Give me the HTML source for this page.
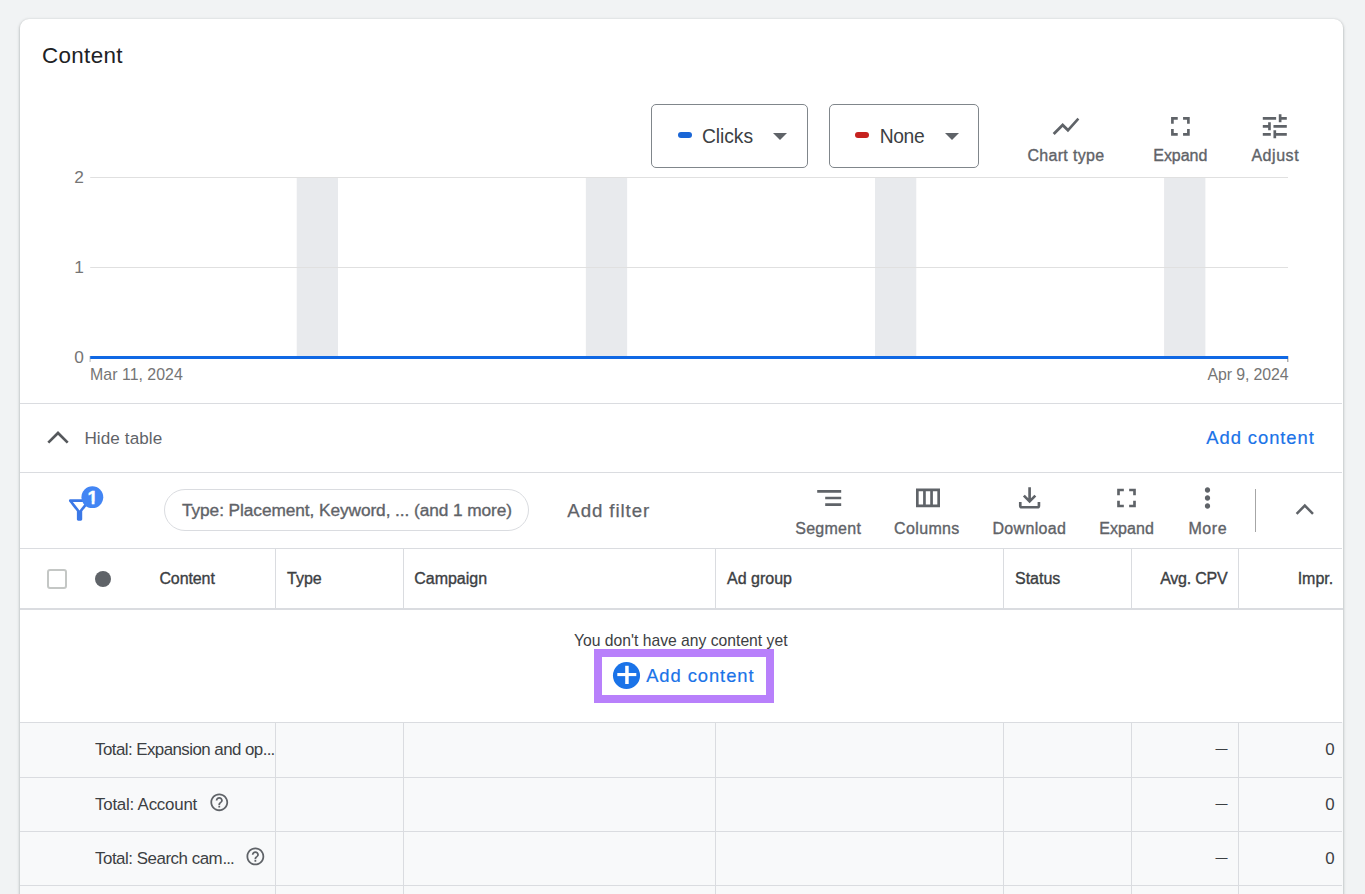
<!DOCTYPE html>
<html lang="en">
<head>
<meta charset="utf-8">
<title>Content</title>
<style>
html,body{margin:0;padding:0}
body{width:1365px;height:894px;overflow:hidden;background:#f1f3f4;position:relative;font-family:"Liberation Sans",sans-serif}
.abs{position:absolute}
.t{position:absolute;white-space:nowrap;line-height:1}
.card{position:absolute;left:20px;top:19px;width:1323px;height:900px;background:#fff;border-radius:9px 9px 0 0;box-shadow:0 1px 2px rgba(60,64,67,.3),0 1px 3px 1px rgba(60,64,67,.15)}
.hl{position:absolute;left:20px;width:1322px;height:1px;background:#dadce0}
.vl{position:absolute;width:1px;background:#dadce0}
.dd{position:absolute;box-sizing:border-box;border:1px solid #80868b;border-radius:5px;background:#fff}
.pill{position:absolute;width:14px;height:6px;border-radius:3px}
.arr{position:absolute;width:0;height:0;border-left:7px solid transparent;border-right:7px solid transparent;border-top:7px solid #5f6368}
.chip{position:absolute;left:164px;top:489px;width:365px;height:42px;box-sizing:border-box;border:1px solid #dadce0;border-radius:21px;background:#fff}
.b1{left:87.6px;top:489px;font-size:18.5px;font-weight:700;color:#fff;-webkit-text-stroke:.4px #fff;clip-path:polygon(0 0,100% 0,100% .675em,.375em .675em,.375em 1em,.225em 1em,.225em .675em,0 .675em)}
.cb{position:absolute;left:47px;top:569px;width:20px;height:20px;box-sizing:border-box;border:2px solid #c4c7c5;border-radius:3px;background:#fff}
</style>
</head>
<body>
<div class="card"></div>
<header class="card-title">
<span class="t" style="top:45.00px;font-size:22.4px;color:#202124;left:42.00px;letter-spacing:0.35px;">Content</span>
</header>
<section class="chart">
<svg class="abs" style="left:0;top:160px" width="1365" height="240" viewBox="0 160 1365 240">
<rect x="296.72" y="177" width="41.30" height="180.5" fill="#e8eaed"/>
<rect x="585.84" y="177" width="41.30" height="180.5" fill="#e8eaed"/>
<rect x="874.97" y="177" width="41.30" height="180.5" fill="#e8eaed"/>
<rect x="1164.09" y="177" width="41.30" height="180.5" fill="#e8eaed"/>
<line x1="90.2" x2="1288.0" y1="177.5" y2="177.5" stroke="#e0e0e0" stroke-width="1"/>
<line x1="90.2" x2="1288.0" y1="267.5" y2="267.5" stroke="#e0e0e0" stroke-width="1"/>
<rect x="89.5" y="356" width="1.2" height="6" fill="#c4c4c4"/>
<rect x="1287.2" y="356" width="1.2" height="6" fill="#9e9e9e"/>
<line x1="90.2" x2="1288.0" y1="357.45" y2="357.45" stroke="#1068e4" stroke-width="3"/>
</svg>
<span class="t" style="top:169.00px;font-size:17.3px;color:#757575;right:1281.10px;">2</span>
<span class="t" style="top:259.00px;font-size:17.3px;color:#757575;right:1281.10px;">1</span>
<span class="t" style="top:349.00px;font-size:17.3px;color:#757575;right:1281.10px;">0</span>
<span class="t" style="top:367.00px;font-size:15.9px;color:#757575;left:90.10px;letter-spacing:0.02px;">Mar 11, 2024</span>
<span class="t" style="top:367.00px;font-size:15.9px;color:#757575;right:76.50px;letter-spacing:-0.1px;">Apr 9, 2024</span>
</section>
<section class="chart-controls">
<div class="dd" style="left:651px;top:104px;width:157px;height:64px"></div>
<div class="pill" style="left:678px;top:132px;background:#1a66d6"></div>
<span class="t" style="top:127.00px;font-size:19.3px;color:#3c4043;left:702.00px;letter-spacing:-0.07px;">Clicks</span>
<div class="arr" style="left:773px;top:133.2px"></div>
<div class="dd" style="left:829.4px;top:104px;width:149.4px;height:64px"></div>
<div class="pill" style="left:855px;top:132px;background:#c5221f"></div>
<span class="t" style="top:127.00px;font-size:19.3px;color:#3c4043;left:879.70px;letter-spacing:-0.37px;">None</span>
<div class="arr" style="left:944.6px;top:133.2px"></div>
<svg class="abs" style="left:1050px;top:110px" width="33" height="33" viewBox="0 0 33 33"><path fill="#5f6368" transform="translate(0 0.3) scale(1.3333)" d="M3.5 18.49l6-6.01 4 4L22 6.92l-1.41-1.41-7.09 7.97-4-4L2 16.99z"/></svg>
<svg class="abs" style="left:1164px;top:110px" width="33" height="33" viewBox="0 0 33 33"><path fill="#5f6368" transform="translate(0.4 0.4) scale(1.3333)" d="M7 14H5v5h5v-2H7v-3zm-2-4h2V7h3V5H5v5zm12 7h-3v2h5v-5h-2v3zM14 5v2h3v3h2V5h-5z"/></svg>
<svg class="abs" style="left:1258px;top:110px" width="33" height="33" viewBox="0 0 33 33"><path fill="#5f6368" transform="translate(0.8 0.3) scale(1.3333)" d="M3 17v2h6v-2H3zM3 5v2h10V5H3zm10 16v-2h8v-2h-8v-2h-2v6h2zM7 9v2H3v2h4v2h2V9H7zm14 4v-2H11v2h10zm-6-4h2V7h4V5h-4V3h-2v6z"/></svg>
<span class="t" style="top:148.00px;font-size:16px;color:#5f6368;left:1027.40px;letter-spacing:0.32px;-webkit-text-stroke:0.35px #5f6368;">Chart type</span>
<span class="t" style="top:148.00px;font-size:16px;color:#5f6368;left:1153.30px;letter-spacing:-0.05px;-webkit-text-stroke:0.35px #5f6368;">Expand</span>
<span class="t" style="top:148.00px;font-size:16px;color:#5f6368;left:1251.40px;letter-spacing:0.55px;-webkit-text-stroke:0.35px #5f6368;">Adjust</span>
</section>
<section class="table-toggle">
<div class="hl" style="top:403px"></div>
<div class="hl" style="top:472px"></div>
<svg class="abs" style="left:44px;top:428px" width="28" height="20" viewBox="0 0 28 20"><polyline points="4.3,14.6 14,5 23.7,14.6" fill="none" stroke="#55585c" stroke-width="2.7"/></svg>
<span class="t" style="top:430.00px;font-size:17.1px;color:#5f6368;left:84.40px;letter-spacing:0.1px;">Hide table</span>
<span class="t" style="top:429.00px;font-size:18.4px;color:#1a73e8;left:1206.30px;letter-spacing:0.93px;-webkit-text-stroke:0.2px #1a73e8;">Add content</span>
</section>
<section class="toolbar">
<svg class="abs" style="left:63px;top:494px" width="33" height="33" viewBox="0 0 33 33"><path fill="#3b78e7" transform="translate(0.55 0.0) scale(1.3333)" d="M7 6h10l-5.01 6.3L7 6zm-2.75-.39C6.27 8.2 10 13 10 13v6c0 .55.45 1 1 1h2c.55 0 1-.45 1-1v-6s3.72-4.8 5.74-7.39c.51-.66.04-1.61-.79-1.61H5.04c-.83 0-1.3.95-.79 1.61z"/></svg>
<svg class="abs" style="left:80px;top:485px" width="25" height="25" viewBox="80 485 25 25"><circle cx="92.35" cy="497.2" r="10.9" fill="#4285f4"/></svg>
<span class="t b1">1</span>
<div class="chip"></div>
<span class="t" style="top:502.00px;font-size:17.3px;color:#5f6368;left:182.00px;letter-spacing:-0.08px;-webkit-text-stroke:0.35px #5f6368;">Type: Placement, Keyword, ... (and 1 more)</span>
<span class="t" style="top:502.00px;font-size:18.7px;color:#5f6368;left:567.30px;letter-spacing:0.9px;-webkit-text-stroke:0.25px #5f6368;">Add filter</span>
<svg class="abs" style="left:813px;top:482px" width="33" height="33" viewBox="0 0 33 33"><path fill="#5f6368" transform="translate(0.2 0) scale(1.3333)" d="M9 18h12v-2H9v2zM3 6v2h18V6H3zm6 7h12v-2H9v2z"/></svg>
<svg class="abs" style="left:912px;top:481px" width="33" height="33" viewBox="0 0 33 33"><path fill="#5f6368" transform="translate(0 0.8) scale(1.3333)" d="M3 5v14h18V5H3zm5.33 12H5V7h3.33v10zm5.34 0h-3.33V7h3.33v10zM19 17h-3.33V7H19v10z"/></svg>
<svg class="abs" style="left:1013px;top:481px" width="33" height="33" viewBox="0 0 33 33"><path fill="#5f6368" transform="translate(0.6 0.9) scale(1.3333)" d="M18 15v3H6v-3H4v3c0 1.1.9 2 2 2h12c1.1 0 2-.9 2-2v-3h-2zm-1-4l-1.41-1.41L13 12.17V4h-2v8.17L8.41 9.59 7 11l5 5 5-5z"/></svg>
<svg class="abs" style="left:1110px;top:482px" width="33" height="33" viewBox="0 0 33 33"><path fill="#5f6368" transform="translate(0.5 0) scale(1.3333)" d="M7 14H5v5h5v-2H7v-3zm-2-4h2V7h3V5H5v5zm12 7h-3v2h5v-5h-2v3zM14 5v2h3v3h2V5h-5z"/></svg>
<svg class="abs" style="left:1191px;top:482px" width="33" height="33" viewBox="0 0 33 33"><path fill="#5f6368" transform="translate(0.5 0) scale(1.3333)" d="M12 8c1.1 0 2-.9 2-2s-.9-2-2-2-2 .9-2 2 .9 2 2 2zm0 2c-1.1 0-2 .9-2 2s.9 2 2 2 2-.9 2-2-.9-2-2-2zm0 6c-1.1 0-2 .9-2 2s.9 2 2 2 2-.9 2-2-.9-2-2-2z"/></svg>
<span class="t" style="top:521.00px;font-size:16px;color:#5f6368;left:795.30px;letter-spacing:0.25px;-webkit-text-stroke:0.35px #5f6368;">Segment</span>
<span class="t" style="top:521.00px;font-size:16px;color:#5f6368;left:894.10px;letter-spacing:0.35px;-webkit-text-stroke:0.35px #5f6368;">Columns</span>
<span class="t" style="top:521.00px;font-size:16px;color:#5f6368;left:992.40px;letter-spacing:0.35px;-webkit-text-stroke:0.35px #5f6368;">Download</span>
<span class="t" style="top:521.00px;font-size:16px;color:#5f6368;left:1099.20px;letter-spacing:0.1px;-webkit-text-stroke:0.35px #5f6368;">Expand</span>
<span class="t" style="top:521.00px;font-size:16px;color:#5f6368;left:1188.40px;letter-spacing:0.6px;-webkit-text-stroke:0.35px #5f6368;">More</span>
<div class="abs" style="left:1255px;top:489px;width:1px;height:43px;background:#a6a6a6"></div>
<svg class="abs" style="left:1291px;top:499px" width="28" height="22" viewBox="0 0 28 22"><polyline points="5.6,14.8 13.8,6.6 22,14.8" fill="none" stroke="#5f6368" stroke-width="2.5"/></svg>
</section>
<section class="table-header">
<div class="hl" style="top:548px"></div>
<div class="abs" style="left:20px;top:608px;width:1323px;height:2px;background:#dadce0"></div>
<div class="vl" style="left:275px;top:549px;height:59px"></div>
<div class="vl" style="left:403px;top:549px;height:59px"></div>
<div class="vl" style="left:715px;top:549px;height:59px"></div>
<div class="vl" style="left:1003px;top:549px;height:59px"></div>
<div class="vl" style="left:1131px;top:549px;height:59px"></div>
<div class="vl" style="left:1238px;top:549px;height:59px"></div>
<div class="cb"></div>
<div class="abs" style="left:95px;top:571px;width:16px;height:16px;border-radius:50%;background:#5f6368"></div>
<span class="t" style="top:571.00px;font-size:16px;color:#3c4043;left:159.40px;letter-spacing:-0.1px;-webkit-text-stroke:0.35px #3c4043;">Content</span>
<span class="t" style="top:571.00px;font-size:16px;color:#3c4043;left:287.00px;-webkit-text-stroke:0.35px #3c4043;">Type</span>
<span class="t" style="top:571.00px;font-size:16px;color:#3c4043;left:414.20px;-webkit-text-stroke:0.35px #3c4043;">Campaign</span>
<span class="t" style="top:571.00px;font-size:16px;color:#3c4043;left:727.00px;-webkit-text-stroke:0.35px #3c4043;">Ad group</span>
<span class="t" style="top:571.00px;font-size:16px;color:#3c4043;left:1015.00px;-webkit-text-stroke:0.35px #3c4043;">Status</span>
<span class="t" style="top:571.00px;font-size:16px;color:#3c4043;right:137.70px;letter-spacing:-0.25px;-webkit-text-stroke:0.35px #3c4043;">Avg. CPV</span>
<span class="t" style="top:571.00px;font-size:16px;color:#3c4043;right:31.80px;-webkit-text-stroke:0.35px #3c4043;">Impr.</span>
</section>
<section class="empty-state">
<span class="t" style="top:633.00px;font-size:15.7px;color:#3c4043;left:574.00px;">You don't have any content yet</span>
<div class="abs" style="left:594px;top:649px;width:180px;height:53.6px;box-sizing:border-box;border:8px solid #b880fb;background:#fff"></div>
<svg class="abs" style="left:610px;top:659px" width="33" height="33" viewBox="610 659 33 33"><circle cx="626.5" cy="675.5" r="13.55" fill="#1a73e8"/><rect x="617.3" y="673" width="19" height="3.1" fill="#fff"/><rect x="625.2" y="665.8" width="3.5" height="18.2" fill="#fff"/></svg>
<span class="t" style="top:667.00px;font-size:18.4px;color:#1a73e8;left:646.20px;letter-spacing:0.92px;-webkit-text-stroke:0.2px #1a73e8;">Add content</span>
</section>
<section class="totals">
<div class="abs" style="left:20px;top:722px;width:1323px;height:172px;background:#f8f9fa"></div>
<div class="hl" style="top:722.3px"></div>
<div class="hl" style="top:776.7px"></div>
<div class="hl" style="top:831.0px"></div>
<div class="hl" style="top:885.3px"></div>
<div class="vl" style="left:275px;top:723px;height:171px"></div>
<div class="vl" style="left:403px;top:723px;height:171px"></div>
<div class="vl" style="left:715px;top:723px;height:171px"></div>
<div class="vl" style="left:1003px;top:723px;height:171px"></div>
<div class="vl" style="left:1131px;top:723px;height:171px"></div>
<div class="vl" style="left:1238px;top:723px;height:171px"></div>
<span class="t" style="top:742.00px;font-size:16.9px;color:#3c4043;left:95.00px;letter-spacing:-0.55px;">Total: Expansion and op<span style="letter-spacing:-0.9px;margin-left:0.2px">...</span></span>
<span class="t" style="top:797.00px;font-size:16.9px;color:#3c4043;left:95.00px;letter-spacing:-0.22px;">Total: Account</span>
<span class="t" style="top:851.00px;font-size:16.9px;color:#3c4043;left:95.00px;letter-spacing:-0.47px;">Total: Search cam<span style="letter-spacing:-0.9px;margin-left:0.2px">...</span></span>
<svg class="abs" style="left:208px;top:791px" width="23" height="23" viewBox="0 0 23 23"><path fill="#5f6368" transform="translate(0.6 0.6) scale(0.8887)" d="M11 18h2v-2h-2v2zm1-16C6.48 2 2 6.48 2 12s4.48 10 10 10 10-4.48 10-10S17.52 2 12 2zm0 18c-4.41 0-8-3.590-8-8s3.590-8 8-8 8 3.590 8 8-3.590 8-8 8zm0-14c-2.210 0-4 1.790-4 4h2c0-1.100.900-2 2-2s2 .900 2 2c0 2-3 1.750-3 5h2c0-2.250 3-2.500 3-5 0-2.210-1.790-4-4-4z"/></svg>
<svg class="abs" style="left:244px;top:845px" width="23" height="23" viewBox="0 0 23 23"><path fill="#5f6368" transform="translate(0.7 0.8) scale(0.8887)" d="M11 18h2v-2h-2v2zm1-16C6.48 2 2 6.48 2 12s4.48 10 10 10 10-4.48 10-10S17.52 2 12 2zm0 18c-4.41 0-8-3.590-8-8s3.590-8 8-8 8 3.590 8 8-3.590 8-8 8zm0-14c-2.210 0-4 1.790-4 4h2c0-1.100.900-2 2-2s2 .900 2 2c0 2-3 1.750-3 5h2c0-2.250 3-2.500 3-5 0-2.210-1.790-4-4-4z"/></svg>
<span class="t" style="top:743.00px;font-size:12px;color:#3c4043;right:137.60px;">—</span>
<span class="t" style="top:742.00px;font-size:16.9px;color:#3c4043;right:30.40px;">0</span>
<span class="t" style="top:798.00px;font-size:12px;color:#3c4043;right:137.60px;">—</span>
<span class="t" style="top:797.00px;font-size:16.9px;color:#3c4043;right:30.40px;">0</span>
<span class="t" style="top:852.00px;font-size:12px;color:#3c4043;right:137.60px;">—</span>
<span class="t" style="top:851.00px;font-size:16.9px;color:#3c4043;right:30.40px;">0</span>
</section>
</body>
</html>
